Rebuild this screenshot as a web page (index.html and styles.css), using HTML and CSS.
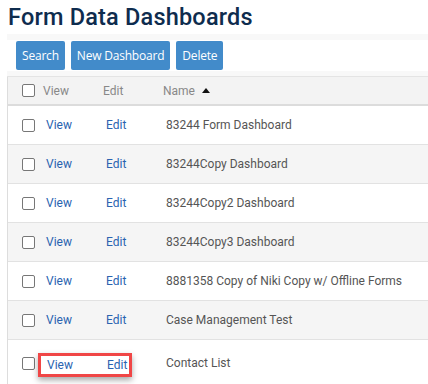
FILE: index.html
```html
<!DOCTYPE html>
<html lang="en">
<head>
    <meta charset="UTF-8">
    <meta name="viewport" content="width=device-width, initial-scale=1.0">
    <title>Form Data Dashboards</title>
    <link rel="stylesheet" href="styles.css">
</head>
<body>
    <h1 class="page-title">Form Data Dashboards</h1>

    <div class="toolbar">
        <div class="toolbar-inner">
            <button class="btn">Search</button>
            <button class="btn">New Dashboard</button>
            <button class="btn">Delete</button>
        </div>
    </div>

    <div class="grid">
        <div class="row head">
            <span class="cell check"><span class="box"></span></span>
            <span class="cell view">View</span>
            <span class="cell edit">Edit</span>
            <span class="cell name">Name <span class="caret"></span></span>
        </div>

        <div class="row">
            <span class="cell check"><span class="box"></span></span>
            <a class="cell view" href="#">View</a>
            <a class="cell edit" href="#">Edit</a>
            <span class="cell name">83244 Form Dashboard</span>
        </div>
        <div class="row alt">
            <span class="cell check"><span class="box"></span></span>
            <a class="cell view" href="#">View</a>
            <a class="cell edit" href="#">Edit</a>
            <span class="cell name">83244Copy Dashboard</span>
        </div>
        <div class="row">
            <span class="cell check"><span class="box"></span></span>
            <a class="cell view" href="#">View</a>
            <a class="cell edit" href="#">Edit</a>
            <span class="cell name">83244Copy2 Dashboard</span>
        </div>
        <div class="row alt">
            <span class="cell check"><span class="box"></span></span>
            <a class="cell view" href="#">View</a>
            <a class="cell edit" href="#">Edit</a>
            <span class="cell name">83244Copy3 Dashboard</span>
        </div>
        <div class="row">
            <span class="cell check"><span class="box"></span></span>
            <a class="cell view" href="#">View</a>
            <a class="cell edit" href="#">Edit</a>
            <span class="cell name">8881358 Copy of Niki Copy w/ Offline Forms</span>
        </div>
        <div class="row alt">
            <span class="cell check"><span class="box"></span></span>
            <a class="cell view" href="#">View</a>
            <a class="cell edit" href="#">Edit</a>
            <span class="cell name">Case Management Test</span>
        </div>
        <div class="row last">
            <span class="cell check"><span class="box"></span></span>
            <span class="highlight">
                <a class="cell view" href="#">View</a>
                <a class="cell edit" href="#">Edit</a>
            </span>
            <span class="cell name">Contact List</span>
        </div>
    </div>
</body>
</html>
```

FILE: styles.css
```css
body {
    font-family: Roboto, "Liberation Sans", sans-serif;
    margin: 0;
    padding: 0 0 0 7px;
    background-color: #fff;
    overflow: hidden;
}

.page-title {
    margin: 0;
    padding: 3px 0 0 1px;
    height: 31px;
    font-size: 23.5px;
    font-weight: 500;
    color: #0e2c4e;
    letter-spacing: 0.2px;
}

.toolbar {
    background-color: #f8f8f8;
    padding: 6px 0 5px 0;
    border-bottom: 1px solid #e4e4e4;
}

.toolbar-inner {
    background-color: #fff;
    display: flex;
    gap: 6px;
    padding: 1px 0 1px 9px;
}

.btn {
    font-family: "Open Sans", "Liberation Sans", sans-serif;
    font-size: 12px;
    letter-spacing: -0.2px;
    color: #fff;
    background-color: #428bca;
    border: none;
    border-radius: 2px;
    height: 29px;
    padding: 0 6px;
    cursor: pointer;
}

.grid {
    border-left: 1px solid #ddd;
}

.row {
    display: flex;
    align-items: center;
    height: 38px;
    border-bottom: 1px solid #e2e2e2;
    font-size: 12px;
    background-color: #fff;
}

.row.alt {
    background-color: #f5f5f5;
}

.row.head {
    height: 27px;
    background-color: #f3f3f3;
    border-bottom: 2px solid #dcdcdc;
    color: #888;
}

.row.last {
    height: 46px;
    border-bottom: none;
}

.cell.check {
    width: 14px;
    margin-left: 14px;
    display: flex;
}

.box {
    width: 11px;
    height: 11px;
    border: 1px solid #777;
    border-radius: 2px;
    background-color: #fff;
}

.cell.view {
    width: 60px;
    margin-left: 10px;
}

.head .cell.view {
    margin-left: 7px;
}

.cell.edit {
    width: 60px;
}

.cell.name {
    color: #555;
}

.head .cell.name {
    color: #888;
}

a.cell {
    color: #2a63b0;
    text-decoration: none;
}

.caret {
    display: inline-block;
    width: 0;
    height: 0;
    margin-left: 4px;
    vertical-align: 2px;
    border-left: 4px solid transparent;
    border-right: 4px solid transparent;
    border-bottom: 5px solid #111;
}

.highlight {
    display: flex;
    align-items: center;
    box-sizing: border-box;
    width: 94px;
    height: 24px;
    margin: 4px 34px 0 2px;
    padding-left: 6px;
    border: 3px solid #f04646;
    box-shadow: 0 3px 6px rgba(0, 0, 0, 0.35);
}

.highlight .cell.view {
    margin-left: 0;
}

.highlight .cell.edit {
    width: auto;
}
```
